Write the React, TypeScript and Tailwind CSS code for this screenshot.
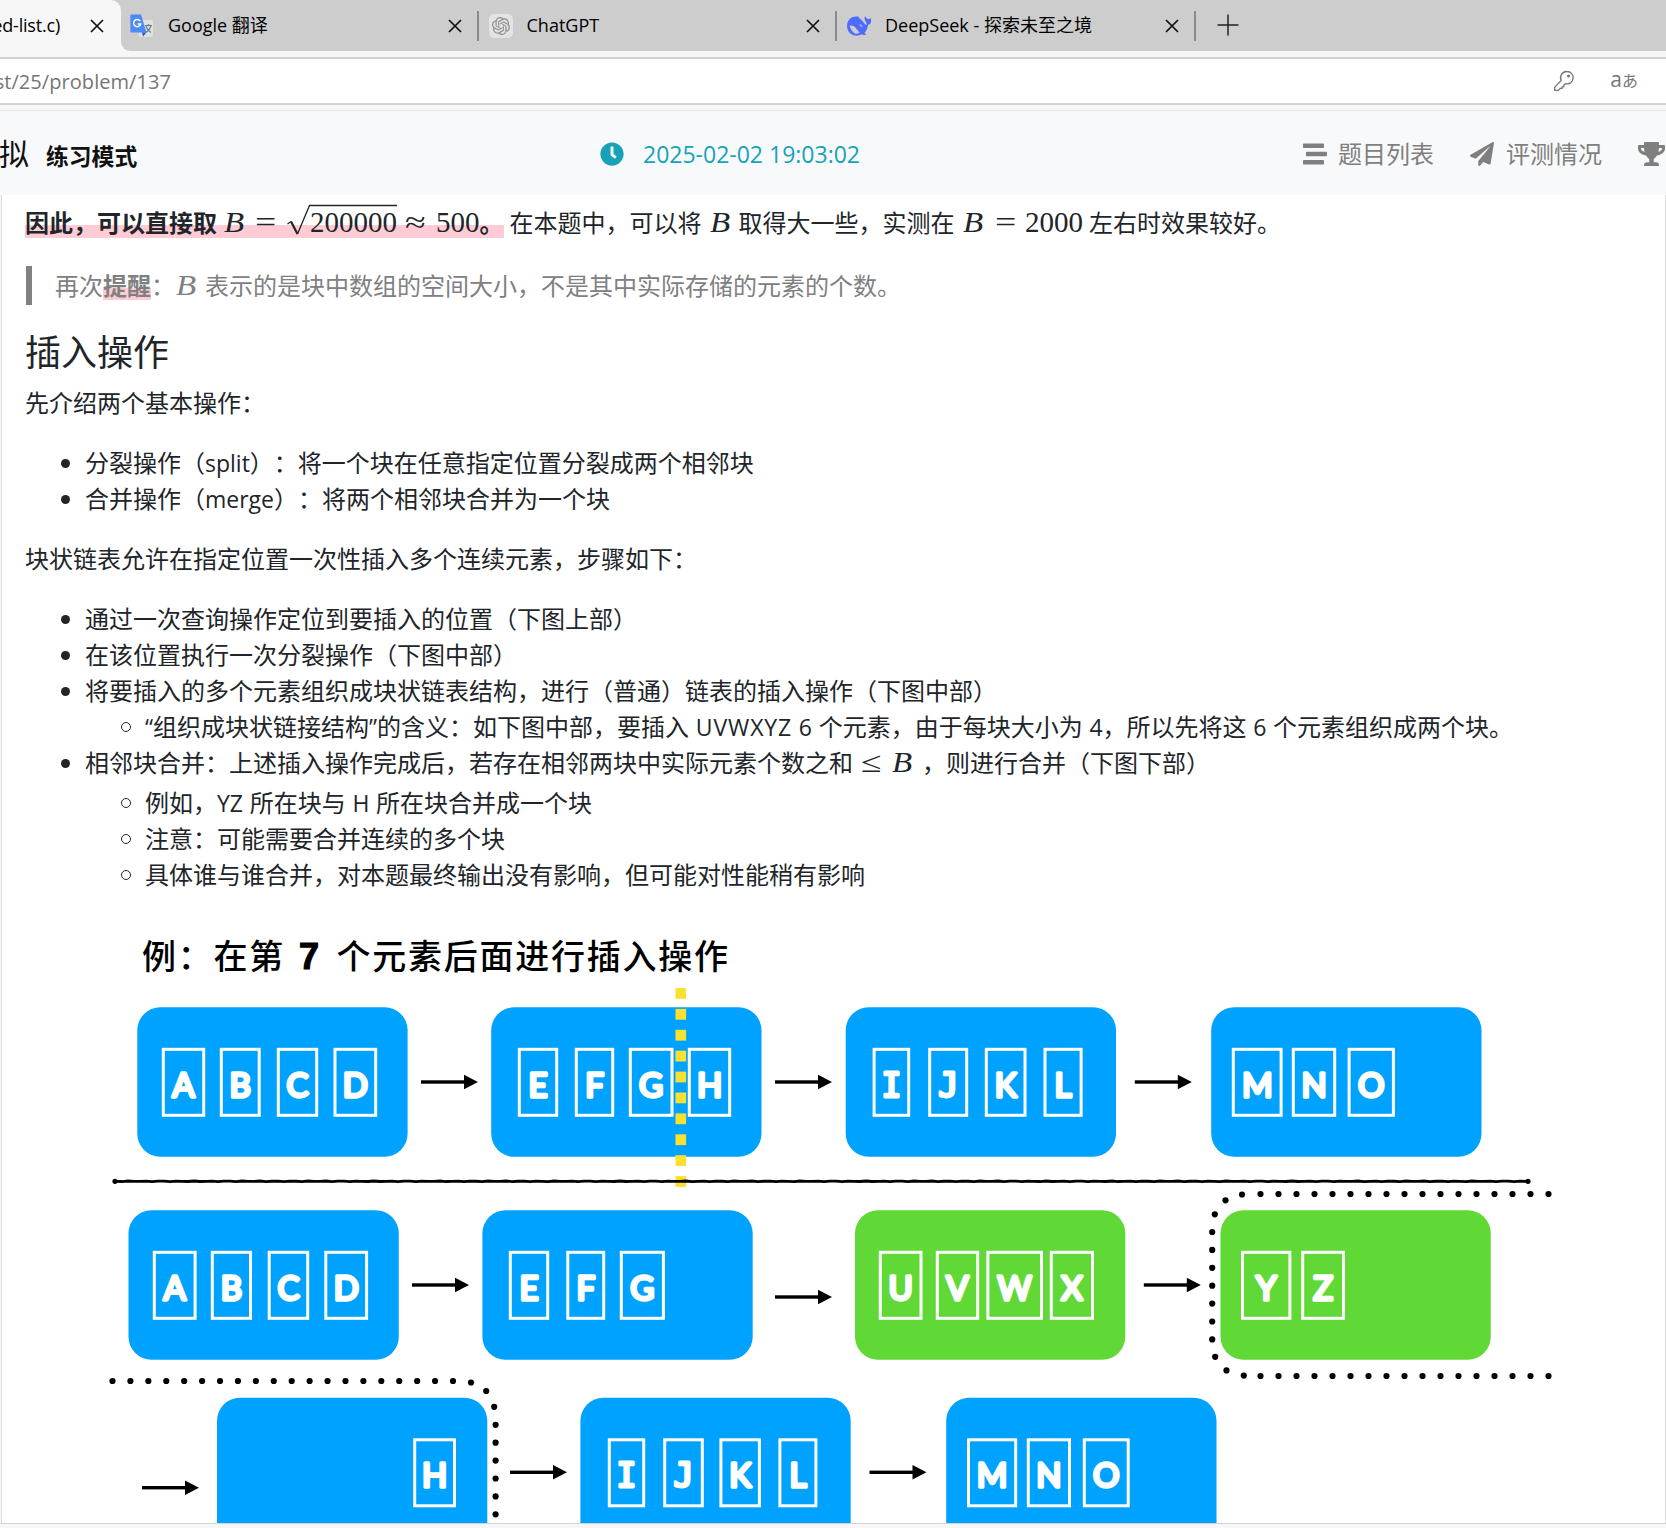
import type { ReactNode } from "react";
import { FaClock, FaPaperPlane, FaStream, FaTrophy } from "react-icons/fa";
import { SiOpenai } from "react-icons/si";

const BLUE = "#00a2ff";
const GREEN = "#60d937";

function CloseIcon() {
  return (
    <svg width="14" height="14" viewBox="0 0 14 14" className="shrink-0" stroke="#111" strokeWidth="1.7" fill="none">
      <path d="M1 1 L13 13 M13 1 L1 13" />
    </svg>
  );
}

function TranslateIcon() {
  return (
    <svg width="24" height="24" viewBox="0 0 24 24" className="shrink-0">
      <rect x="9" y="6" width="14" height="17" rx="1.5" fill="#dfe1e3" />
      <path d="M15 11.5h7M18.5 10v1.500M21 11.500c-.8 3-3 5.500-5.500 7M16 12c.8 2.500 2.500 4.800 4.800 6.500" stroke="#6b8087" strokeWidth="1.200" fill="none" />
      <path d="M1.500 0.500h9.500l5.500 18H1.500C.8 18.500.3 18 .3 17.300V1.700C.3 1 .8.500 1.500.500z" fill="#4c8bf5" />
      <path d="M12 18.500h4.500l-3.500 4z" fill="#2f56c9" />
      <path d="M10.300 7.200A3.600 3.600 0 1 0 10.700 10H7.600" stroke="#fff" strokeWidth="1.500" fill="none" />
    </svg>
  );
}

function WhaleIcon() {
  return (
    <svg width="24" height="20" viewBox="0 0 24 20" className="shrink-0">
      <path
        d="M23.700 2.200c-.3-.1-.5.1-.7.3-.6.700-1.300.800-2.300.500-1-.4-1.700-1.200-2.200-2.200-.2-.4-.6-.4-.7 0-.4 1.400-.3 3.100.7 4.400.9 1.100 1.300 2.500.9 4-1.200-.7-2.300-2.300-3.500-3.800-1-1.200-2.100-2.200-3.600-3.100-.7-.5-.2-1.100-.3-1.400C8.600-.1 5.400.700 3 2.800.700 4.900-.2 8 .1 11.200c.4 3.700 2.500 6.300 5.800 7.800 2.900 1.200 6 1 8.600-.7 1.500.800 3 .9 4.100.4.500-.3.400-.8 0-1-.7-.3-1.300-.5-1.200-.8 2-2 3.200-4.700 3.700-8.100 1.300-.2 2.200-.9 2.600-2.100.5-1.300.6-2.700 0-4.500zM8 17.500C4.700 15.500 3 11.800 2.800 9.600c2.400-.4 4.200.300 5.900 2.300 1.500 1.800 2.500 3 4 4.500-1.600 1.300-3.300 1.600-4.700 1.100zm5.500-7.700c-.8-.4-1.200-1-.9-1.600 1.600.100 2.900 1.700 2.900 3.300-.8-.2-1.400-.8-2-1.700z"
        fill="#4d6bfe"
        fillRule="evenodd"
      />
    </svg>
  );
}

function KeyIcon() {
  return (
    <svg width="22" height="22" viewBox="0 0 22 22" className="shrink-0" fill="none" stroke="#767676" strokeWidth="1.300" strokeLinejoin="round">
      <path d="M14 1.500a6.200 6.200 0 1 1-1.600 12.200l-1.600 1.500v1.600H9.100v1.500H7.400L5.300 20.400H1.700v-3.300l6.500-6.600A6.200 6.200 0 0 1 14 1.500z" />
      <circle cx="15.500" cy="6" r="0.900" fill="#767676" />
    </svg>
  );
}

function Tab({ icon, title }: { icon: ReactNode; title: string }) {
  return (
    <div className="flex h-[51px] w-[358.500px] items-center">
      <div className="flex w-6 shrink-0 justify-center">{icon}</div>
      <div className="mb-[2px] ml-[14px] flex-1 whitespace-pre text-[18px]">{title}</div>
      <CloseIcon />
      <div className="mr-[10px] ml-[15px] h-[30px] w-[2px] bg-[#8a8a8a]" />
    </div>
  );
}

function Latin({ children }: { children: ReactNode }) {
  return <span className="text-[23px] [word-spacing:0.700px]">{children}</span>;
}

function VarB({ className = "" }: { className?: string }) {
  return (
    <span className={`mb-[2px] inline-block shrink-0 font-[Liberation_Serif] text-[30px] leading-[36px] italic ${className}`}>
      <span className="inline-block origin-left scale-x-[1.100]">B</span>
    </span>
  );
}

function Num({ children }: { children: ReactNode }) {
  return <span className="mb-[2px] inline-block shrink-0 font-[Liberation_Serif] text-[29px] leading-[36px]">{children}</span>;
}

function Rel({ children, className = "" }: { children: ReactNode; className?: string }) {
  return (
    <span className={`mb-[2px] inline-block shrink-0 font-[Liberation_Serif] text-[29px] leading-[36px] ${className}`}>
      <span className="inline-block origin-left scale-x-[1.300]">{children}</span>
    </span>
  );
}

function Item({ children, sub = false }: { children: ReactNode; sub?: boolean }) {
  return (
    <li className={sub ? "flex h-9 items-center pl-[120px]" : "flex h-9 items-center pl-[60px]"}>
      <span className={sub ? "-ml-6 size-[10px] shrink-0 rounded-full border border-[#212529]" : "-ml-6 size-[9px] shrink-0 rounded-full bg-[#212529]"} />
      <span className={sub ? "ml-[14px] whitespace-pre" : "ml-[15px] whitespace-pre"}>{children}</span>
    </li>
  );
}

type Cell = [string, number, number];

function Block({ x, y, color = BLUE, cellY, cells }: { x: number; y: number; color?: string; cellY: number; cells: Cell[] }) {
  return (
    <g>
      <rect x={x} y={y} width="270.300" height="149.500" rx="23" fill={color} />
      {cells.map(([letter, a, b]) => (
        <g key={letter}>
          <rect x={a + 1.3} y={cellY + 1.3} width={b - a - 2.6} height="66" fill="none" stroke="#fff" strokeWidth="3" />
          <text
            x={(a + b) / 2}
            y={cellY + 48.8}
            textAnchor="middle"
            fill="#fff"
            stroke="#fff"
            strokeWidth={letter === "I" || letter === "J" ? 3 : 3.4}
            strokeLinejoin="round"
            fontFamily={letter === "I" || letter === "J" ? "DejaVu Sans Mono" : "Lato"}
            fontWeight="400"
            fontSize={33}
          >
            {letter}
          </text>
        </g>
      ))}
    </g>
  );
}

function Arrow({ x, y }: { x: number; y: number }) {
  return (
    <g>
      <rect x={x} y={y - 1.7} width="45" height="3.400" />
      <path d={`M${x + 43} ${y - 7.2} L${x + 57} ${y} L${x + 43} ${y + 7.2}z`} />
    </g>
  );
}

const range = (n: number, start: number, step: number) => Array.from({ length: n }, (_, i) => start + i * step);

const dots: [number, number][] = [
  ...range(17, 1260.5, 18).map((x): [number, number] => [x, 1194]),
  [1242, 1194.5], [1225.5, 1200.3], [1214.8, 1214.3],
  ...range(7, 1232, 17.9).map((y): [number, number] => [1212.2, y]),
  [1215.2, 1356.8], [1226.5, 1370.4], [1243.8, 1375.6],
  ...range(17, 1260.5, 18).map((x): [number, number] => [x, 1376]),
  ...range(20, 112.5, 17.92).map((x): [number, number] => [x, 1381]),
  [471, 1382.5], [486.2, 1391], [494.2, 1406.8],
  ...range(6, 1424.8, 17.9).map((y): [number, number] => [495.6, y]),
];

const separator = range(236, 116, 6)
  .map((x, i) => `${x} ${(1181.3 + Math.sin(i * 2.3) * 0.3).toFixed(2)}`)
  .join(" L");

function Diagram() {
  return (
    <svg width="1662" height="607" viewBox="2 916 1662 607" className="block">
      <g fontFamily="Noto Sans CJK SC" fontSize="34" fontWeight="500">
        {[..."例：在第"].map((c, i) => (
          <text key={i} x={142 + i * 35.75} y="969">{c}</text>
        ))}
        <text x="299" y="968.500" fontFamily="Liberation Sans" fontWeight="700" fontSize="36" stroke="#000" strokeWidth="1.200">7</text>
        {[..."个元素后面进行插入操作"].map((c, i) => (
          <text key={i} x={336.500 + i * 35.75} y="969">{c}</text>
        ))}
      </g>

      <Block x={137.300} y={1007.300} cellY={1048} cells={[["A", 162, 205], ["B", 220, 260.5], ["C", 277, 318], ["D", 333.7, 377]]} />
      <Block x={491.200} y={1007.300} cellY={1048} cells={[["E", 518, 558], ["F", 575, 614], ["G", 629, 673.3], ["H", 688, 731]]} />
      <Block x={845.700} y={1007.300} cellY={1048} cells={[["I", 872.8, 910], ["J", 928.4, 968], ["K", 985, 1026.3], ["L", 1043.7, 1082.4]]} />
      <Block x={1211.200} y={1007.300} cellY={1048} cells={[["M", 1232, 1282.4], ["N", 1292, 1336], ["O", 1347.8, 1394.7]]} />
      <Arrow x={421} y={1082} />
      <Arrow x={775} y={1082} />
      <Arrow x={1134.800} y={1082} />
      {range(10, 988, 20.9).map((y) => (
        <rect key={y} x="675.500" y={y} width="10.600" height="10.800" fill="#fbe12f" />
      ))}
      <path d={`M${separator}`} fill="none" stroke="#000" strokeWidth="2.800" />
      <circle cx="115" cy="1181.300" r="2.600" />
      <circle cx="1528" cy="1181.300" r="2.600" />

      <Block x={128.500} y={1210.200} cellY={1251} cells={[["A", 153, 196.4], ["B", 211, 251.8], ["C", 267.9, 309], ["D", 324.5, 367.9]]} />
      <Block x={482.400} y={1210.200} cellY={1251} cells={[["E", 509, 549], ["F", 566.5, 605], ["G", 620, 664.7]]} />
      <Block x={855} y={1210.200} color={GREEN} cellY={1251} cells={[["U", 879, 922.3], ["V", 936, 979], ["W", 986.6, 1042.8], ["X", 1050, 1093.8]]} />
      <Block x={1220.500} y={1210.200} color={GREEN} cellY={1251} cells={[["Y", 1241.2, 1291.2], ["Z", 1301.4, 1344.8]]} />
      <Arrow x={412} y={1285} />
      <Arrow x={775} y={1297} />
      <Arrow x={1143.800} y={1285} />

      <Block x={217} y={1397.700} cellY={1438.500} cells={[["H", 413.4, 455.8]]} />
      <Block x={580.400} y={1397.700} cellY={1438.500} cells={[["I", 608, 645], ["J", 663.4, 703.6], ["K", 719.6, 760.7], ["L", 778.6, 817.2]]} />
      <Block x={946.200} y={1397.700} cellY={1438.500} cells={[["M", 967.2, 1017], ["N", 1027, 1070.8], ["O", 1083, 1129.5]]} />
      <Arrow x={142} y={1487.700} />
      <Arrow x={510} y={1472.300} />
      <Arrow x={869.500} y={1472.300} />

      {dots.map(([x, y], i) => (
        <circle key={i} cx={x} cy={y} r="3.100" />
      ))}
    </svg>
  );
}

export default function App() {
  return (
    <div
      lang="zh-CN"
      className="flex h-[1528px] w-[1666px] flex-col overflow-hidden bg-[#f7f7f7] font-['Open_Sans','Noto_Sans_CJK_SC',sans-serif] text-[24px] leading-[36px] text-[#212529] [text-spacing-trim:space-all]"
    >
      <div className="flex h-[51px] shrink-0 bg-[#cdcdcd] text-black">
        <div className="flex w-[121px] shrink-0 bg-[#cdcdcd]">
          <div className="flex h-[51px] w-[121px] items-center justify-end rounded-tr-[10px] bg-[#f7f7f7] pr-[17px]">
            <span className="mr-[30px] mb-[2px] whitespace-pre text-[18px] tracking-[-0.200px]">ed-list.c)</span>
            <CloseIcon />
          </div>
        </div>
        <div className="w-[9px] bg-[#f7f7f7]">
          <div className="h-[51px] w-[9px] rounded-bl-[9px] bg-[#cdcdcd]" />
        </div>
        <Tab icon={<TranslateIcon />} title="Google 翻译" />
        <Tab
          icon={
            <span className="flex size-6 items-center justify-center rounded-[5px] bg-[#e3e3e3] text-[18px] text-[#8f8f8f]">
              <SiOpenai />
            </span>
          }
          title="ChatGPT"
        />
        <Tab icon={<WhaleIcon />} title="DeepSeek - 探索未至之境" />
        <div className="ml-[11px] flex h-[51px] items-center pb-[2px]">
          <svg width="22" height="22" viewBox="0 0 22 22" stroke="#222" strokeWidth="1.500">
            <path d="M0.500 11h21M11 0.500v21" />
          </svg>
        </div>
      </div>

      <div className="mt-[6px] flex h-[48px] shrink-0 items-center border-y-2 border-[#d3d3d3] bg-white">
        <div className="mt-[2px] flex w-[171px] justify-end whitespace-pre text-[20px] tracking-[0.060px] text-[#767676]">st/25/problem/137</div>
        <div className="mr-[28px] ml-auto flex items-center text-[#767676]">
          <KeyIcon />
          <span className="mb-[3px] ml-[35px] flex items-baseline leading-[24px]">
            <span className="text-[21px]">a</span>
            <span className="font-['Noto_Sans_CJK_JP'] text-[16px]">あ</span>
          </span>
        </div>
      </div>

      <div className="mt-[5px] flex h-[85px] shrink-0 items-center border-t border-[#e6e6e6] bg-[#f8f9fb] pt-[2px]">
        <div className="flex w-[600px] shrink-0 items-center text-[#111]">
          <span className="-ml-[1px] text-[30px]">拟</span>
          <span className="mt-[5px] ml-[17px] text-[22.800px] font-bold">练习模式</span>
        </div>
        <FaClock className="size-[24px] shrink-0 text-[#17a2b8]" />
        <span className="ml-[19px] whitespace-pre text-[23px] text-[#17a2b8]">2025-02-02 19:03:02</span>
        <div className="mr-[1px] ml-auto flex shrink-0 items-center text-[#7f7f7f]">
          <FaStream className="size-[24px]" />
          <span className="ml-[11px]">题目列表</span>
          <FaPaperPlane className="ml-[36px] size-[24px]" />
          <span className="ml-[12px]">评测情况</span>
          <FaTrophy className="ml-[36px] h-[24px] w-[27px]" />
        </div>
      </div>

      <div className="ml-px flex h-[1328px] w-[1665px] shrink-0 flex-col overflow-hidden border-x border-[#dcdce2] bg-white">
        <div className="flex flex-col pl-[23px]">
          <p className="mt-[9px] flex h-[38px] items-center whitespace-pre">
            <span className="flex h-[36px] items-center bg-[linear-gradient(transparent_20px,#ffccd5_20px,#ffccd5_33px,transparent_33px)]">
              <b>因此，可以直接取</b>
              <VarB className="ml-[7px] w-[31px]" />
              <Rel className="w-[31px]">=</Rel>
              <span className="relative inline-flex w-[111px] shrink-0 pl-[24px]">
                <svg className="absolute -top-[2px] left-0" width="111" height="36" viewBox="0 0 111 36" fill="none" stroke="#212529">
                  <path d="M1.500 22 L5 19.500" strokeWidth="1.200" />
                  <path d="M5 19.500 L11.500 32" strokeWidth="2.200" />
                  <path d="M11.500 32 L23.500 3.500 H111" strokeWidth="1.300" />
                </svg>
                <Num>200000</Num>
              </span>
              <Rel className="ml-[8px] w-[31px]">≈</Rel>
              <Num>500</Num>
              <b>。</b>
            </span>
            <span className="ml-[6px]">在本题中，可以将</span>
            <VarB className="ml-[8px] w-[29px]" />
            <span>取得大一些，实测在</span>
            <VarB className="ml-[8px] w-[32px]" />
            <Rel className="w-[30.500px]">=</Rel>
            <Num>2000</Num>
            <span className="ml-[6px]">左右时效果较好。</span>
          </p>

          <blockquote className="mt-[24px] ml-[1px] flex h-[39px] items-center border-l-[6px] border-[#808080] pl-[23px] whitespace-pre text-[#808080]">
            <span>再次</span>
            <b className="bg-[linear-gradient(transparent_20px,#ffccd5_20px,#ffccd5_32px,transparent_32px)]">提醒</b>
            <span>：</span>
            <VarB className="ml-[1px] w-[29px]" />
            <span>表示的是块中数组的空间大小，不是其中实际存储的元素的个数。</span>
          </blockquote>

          <h3 className="mt-[26px] text-[36px] leading-[43px]">插入操作</h3>
          <p className="mt-[11px]">先介绍两个基本操作：</p>

          <ul className="mt-[24px]">
            <Item>分裂操作（<Latin>split</Latin>）：将一个块在任意指定位置分裂成两个相邻块</Item>
            <Item>合并操作（<Latin>merge</Latin>）：将两个相邻块合并为一个块</Item>
          </ul>

          <p className="mt-[24px]">块状链表允许在指定位置一次性插入多个连续元素，步骤如下：</p>

          <ul className="mt-[24px]">
            <Item>通过一次查询操作定位到要插入的位置（下图上部）</Item>
            <Item>在该位置执行一次分裂操作（下图中部）</Item>
            <Item>将要插入的多个元素组织成块状链表结构，进行（普通）链表的插入操作（下图中部）</Item>
            <Item sub>
              <Latin>“</Latin>组织成块状链接结构<Latin>”</Latin>的含义：如下图中部，要插入<Latin> <span className="tracking-[0.900px]">UVWXYZ</span> 6 </Latin>个元素，由于每块大小为<Latin> 4</Latin>，所以先将这<Latin> 6 </Latin>个元素组织成两个块。
            </Item>
            <Item>
              <span className="flex items-center">
                <span>相邻块合并：上述插入操作完成后，若存在相邻两块中实际元素个数之和</span>
                <Rel className="ml-[8px] w-[31px]">≤</Rel>
                <VarB className="w-[30px]" />
                <span>，则进行合并（下图下部）</span>
              </span>
            </Item>
          </ul>
          <ul className="mt-[4px]">
            <Item sub>例如，<Latin>YZ </Latin>所在块与<Latin> H </Latin>所在块合并成一个块</Item>
            <Item sub>注意：可能需要合并连续的多个块</Item>
            <Item sub>具体谁与谁合并，对本题最终输出没有影响，但可能对性能稍有影响</Item>
          </ul>
        </div>
        <div className="mt-[23px] shrink-0">
          <Diagram />
        </div>
      </div>
      <div className="h-[5px] shrink-0 border-t border-[#d3d3d3] bg-[#f7f7f7]" />
    </div>
  );
}
